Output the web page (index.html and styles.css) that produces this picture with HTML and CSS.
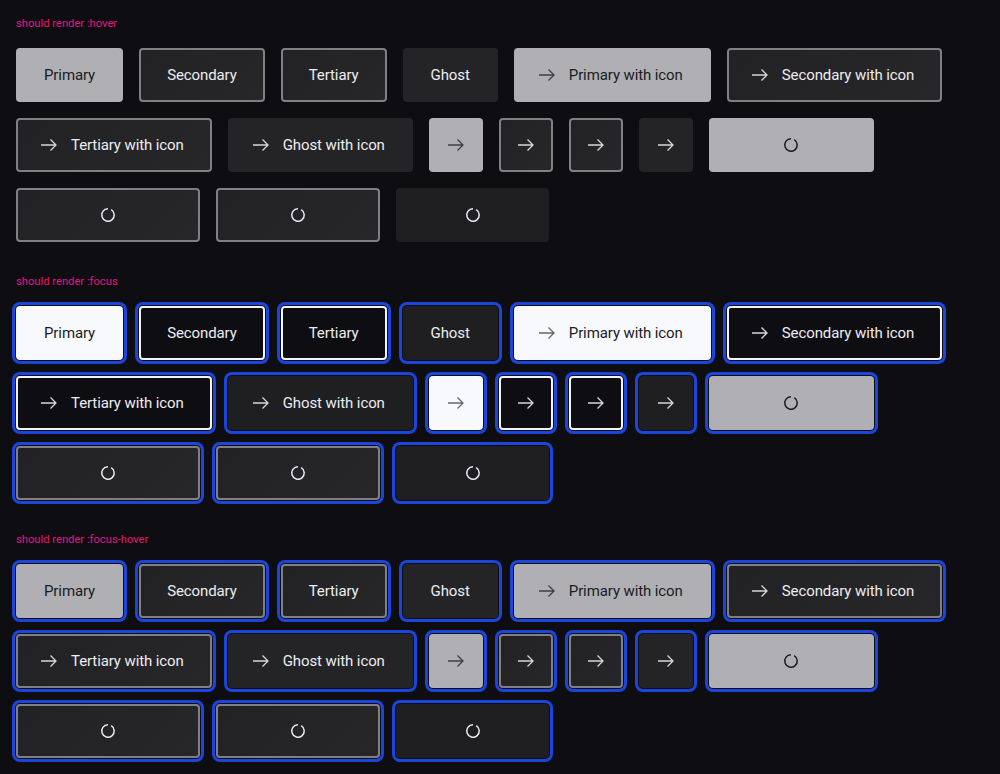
FILE: index.html
```html
<!DOCTYPE html>
<html lang="en">
<head>
<meta charset="utf-8">
<title>Button states</title>
<link rel="stylesheet" href="styles.css">
</head>
<body>
<main class="page">

  <section class="group">
    <p class="label">should render :hover</p>
    <div class="buttons state-hover">
      <button class="btn primary">Primary</button>
      <button class="btn secondary">Secondary</button>
      <button class="btn tertiary">Tertiary</button>
      <button class="btn ghost">Ghost</button>
      <button class="btn primary with-icon"><svg class="ico" viewBox="0 0 24 24"><path d="M4 12h15M13.5 6.5 19 12l-5.5 5.5"/></svg>Primary with icon</button>
      <button class="btn secondary with-icon"><svg class="ico" viewBox="0 0 24 24"><path d="M4 12h15M13.5 6.5 19 12l-5.5 5.5"/></svg>Secondary with icon</button>
      <button class="btn tertiary with-icon"><svg class="ico" viewBox="0 0 24 24"><path d="M4 12h15M13.5 6.5 19 12l-5.5 5.5"/></svg>Tertiary with icon</button>
      <button class="btn ghost with-icon"><svg class="ico" viewBox="0 0 24 24"><path d="M4 12h15M13.5 6.5 19 12l-5.5 5.5"/></svg>Ghost with icon</button>
      <button class="btn primary icon-only"><svg class="ico" viewBox="0 0 24 24"><path d="M4 12h15M13.5 6.5 19 12l-5.5 5.5"/></svg></button>
      <button class="btn secondary icon-only"><svg class="ico" viewBox="0 0 24 24"><path d="M4 12h15M13.5 6.5 19 12l-5.5 5.5"/></svg></button>
      <button class="btn tertiary icon-only"><svg class="ico" viewBox="0 0 24 24"><path d="M4 12h15M13.5 6.5 19 12l-5.5 5.5"/></svg></button>
      <button class="btn ghost icon-only"><svg class="ico" viewBox="0 0 24 24"><path d="M4 12h15M13.5 6.5 19 12l-5.5 5.5"/></svg></button>
      <button class="btn primary loading loading-primary"><svg class="spin" viewBox="0 0 16 16"><path d="M8 1.75A6.25 6.25 0 1 0 11.2 2.65"/></svg></button>
      <button class="btn secondary loading loading-secondary"><svg class="spin" viewBox="0 0 16 16"><path d="M8 1.75A6.25 6.25 0 1 0 11.2 2.65"/></svg></button>
      <button class="btn tertiary loading loading-tertiary"><svg class="spin" viewBox="0 0 16 16"><path d="M8 1.75A6.25 6.25 0 1 0 11.2 2.65"/></svg></button>
      <button class="btn ghost loading loading-ghost"><svg class="spin" viewBox="0 0 16 16"><path d="M8 1.75A6.25 6.25 0 1 0 11.2 2.65"/></svg></button>
    </div>
  </section>

  <section class="group">
    <p class="label">should render :focus</p>
    <div class="buttons state-focus">
      <button class="btn primary">Primary</button>
      <button class="btn secondary">Secondary</button>
      <button class="btn tertiary">Tertiary</button>
      <button class="btn ghost">Ghost</button>
      <button class="btn primary with-icon"><svg class="ico" viewBox="0 0 24 24"><path d="M4 12h15M13.5 6.5 19 12l-5.5 5.5"/></svg>Primary with icon</button>
      <button class="btn secondary with-icon"><svg class="ico" viewBox="0 0 24 24"><path d="M4 12h15M13.5 6.5 19 12l-5.5 5.5"/></svg>Secondary with icon</button>
      <button class="btn tertiary with-icon"><svg class="ico" viewBox="0 0 24 24"><path d="M4 12h15M13.5 6.5 19 12l-5.5 5.5"/></svg>Tertiary with icon</button>
      <button class="btn ghost with-icon"><svg class="ico" viewBox="0 0 24 24"><path d="M4 12h15M13.5 6.5 19 12l-5.5 5.5"/></svg>Ghost with icon</button>
      <button class="btn primary icon-only"><svg class="ico" viewBox="0 0 24 24"><path d="M4 12h15M13.5 6.5 19 12l-5.5 5.5"/></svg></button>
      <button class="btn secondary icon-only"><svg class="ico" viewBox="0 0 24 24"><path d="M4 12h15M13.5 6.5 19 12l-5.5 5.5"/></svg></button>
      <button class="btn tertiary icon-only"><svg class="ico" viewBox="0 0 24 24"><path d="M4 12h15M13.5 6.5 19 12l-5.5 5.5"/></svg></button>
      <button class="btn ghost icon-only"><svg class="ico" viewBox="0 0 24 24"><path d="M4 12h15M13.5 6.5 19 12l-5.5 5.5"/></svg></button>
      <button class="btn primary loading loading-primary"><svg class="spin" viewBox="0 0 16 16"><path d="M8 1.75A6.25 6.25 0 1 0 11.2 2.65"/></svg></button>
      <button class="btn secondary loading loading-secondary"><svg class="spin" viewBox="0 0 16 16"><path d="M8 1.75A6.25 6.25 0 1 0 11.2 2.65"/></svg></button>
      <button class="btn tertiary loading loading-tertiary"><svg class="spin" viewBox="0 0 16 16"><path d="M8 1.75A6.25 6.25 0 1 0 11.2 2.65"/></svg></button>
      <button class="btn ghost loading loading-ghost"><svg class="spin" viewBox="0 0 16 16"><path d="M8 1.75A6.25 6.25 0 1 0 11.2 2.65"/></svg></button>
    </div>
  </section>

  <section class="group">
    <p class="label">should render :focus-hover</p>
    <div class="buttons state-focus-hover">
      <button class="btn primary">Primary</button>
      <button class="btn secondary">Secondary</button>
      <button class="btn tertiary">Tertiary</button>
      <button class="btn ghost">Ghost</button>
      <button class="btn primary with-icon"><svg class="ico" viewBox="0 0 24 24"><path d="M4 12h15M13.5 6.5 19 12l-5.5 5.5"/></svg>Primary with icon</button>
      <button class="btn secondary with-icon"><svg class="ico" viewBox="0 0 24 24"><path d="M4 12h15M13.5 6.5 19 12l-5.5 5.5"/></svg>Secondary with icon</button>
      <button class="btn tertiary with-icon"><svg class="ico" viewBox="0 0 24 24"><path d="M4 12h15M13.5 6.5 19 12l-5.5 5.5"/></svg>Tertiary with icon</button>
      <button class="btn ghost with-icon"><svg class="ico" viewBox="0 0 24 24"><path d="M4 12h15M13.5 6.5 19 12l-5.5 5.5"/></svg>Ghost with icon</button>
      <button class="btn primary icon-only"><svg class="ico" viewBox="0 0 24 24"><path d="M4 12h15M13.5 6.5 19 12l-5.5 5.5"/></svg></button>
      <button class="btn secondary icon-only"><svg class="ico" viewBox="0 0 24 24"><path d="M4 12h15M13.5 6.5 19 12l-5.5 5.5"/></svg></button>
      <button class="btn tertiary icon-only"><svg class="ico" viewBox="0 0 24 24"><path d="M4 12h15M13.5 6.5 19 12l-5.5 5.5"/></svg></button>
      <button class="btn ghost icon-only"><svg class="ico" viewBox="0 0 24 24"><path d="M4 12h15M13.5 6.5 19 12l-5.5 5.5"/></svg></button>
      <button class="btn primary loading loading-primary"><svg class="spin" viewBox="0 0 16 16"><path d="M8 1.75A6.25 6.25 0 1 0 11.2 2.65"/></svg></button>
      <button class="btn secondary loading loading-secondary"><svg class="spin" viewBox="0 0 16 16"><path d="M8 1.75A6.25 6.25 0 1 0 11.2 2.65"/></svg></button>
      <button class="btn tertiary loading loading-tertiary"><svg class="spin" viewBox="0 0 16 16"><path d="M8 1.75A6.25 6.25 0 1 0 11.2 2.65"/></svg></button>
      <button class="btn ghost loading loading-ghost"><svg class="spin" viewBox="0 0 16 16"><path d="M8 1.75A6.25 6.25 0 1 0 11.2 2.65"/></svg></button>
    </div>
  </section>

</main>
</body>
</html>
```

FILE: styles.css
```css
* { box-sizing: border-box; }

html, body {
  margin: 0;
  background: #0e0e12;
}

.page {
  padding: 16px;
  display: flex;
  flex-direction: column;
  gap: 32px;
  font-family: Roboto, "Liberation Sans", sans-serif;
}

.label {
  margin: 0 0 16px;
  height: 16px;
  font-size: 11.2px;
  line-height: 16px;
  color: #e5157d;
}

.buttons {
  display: flex;
  flex-wrap: wrap;
  gap: 16px;
}

.btn {
  display: inline-flex;
  align-items: center;
  justify-content: center;
  gap: 10px;
  height: 54px;
  padding: 0 26px;
  border: 2px solid transparent;
  border-radius: 4px;
  font-family: Roboto, "Liberation Sans", sans-serif;
  font-size: 15px;
  letter-spacing: -0.1px;
  color: #ececf0;
  background: #242427;
  cursor: pointer;
}

.btn.with-icon { padding: 0 26px 0 19px; }
.btn.icon-only { width: 54px; padding: 0; }
.btn.loading { padding: 0; }

.loading-primary { width: 165px; }
.loading-secondary { width: 184px; }
.loading-tertiary { width: 164px; }
.loading-ghost { width: 153px; }

.ico {
  width: 24px;
  height: 24px;
  flex: none;
  fill: none;
  stroke: currentColor;
  stroke-width: 1.3;
  stroke-linecap: butt;
  stroke-linejoin: miter;
}

.spin {
  width: 16px;
  height: 16px;
  fill: none;
  stroke: currentColor;
  stroke-width: 1.5;
}

/* ---------- shared surface looks ---------- */
.state-hover .primary,
.state-focus-hover .primary,
.state-focus .loading.primary {
  background: #b0b0b4;
  color: #1b1b1f;
}

.state-hover .secondary,
.state-hover .tertiary,
.state-focus-hover .secondary,
.state-focus-hover .tertiary,
.state-focus .loading.secondary,
.state-focus .loading.tertiary {
  background: linear-gradient(135deg, #222225 0%, #27272a 100%);
  border-color: #808084;
}

.state-hover .ghost,
.state-focus-hover .ghost {
  background: #242427;
}

.state-hover .loading.ghost,
.state-focus-hover .loading.ghost,
.state-focus .ghost {
  background: #1f1f22;
}

.primary .ico { color: #3e3e44; }
.secondary .ico, .tertiary .ico, .ghost .ico { color: #d6d6da; }
.primary .spin { color: #1b1b1f; }

/* ---------- focus ---------- */
.state-focus .btn,
.state-focus-hover .btn {
  box-shadow: 0 0 0 1px #0e0e12, 0 0 0 4px #1c45dc;
}

.state-focus .primary {
  background: #f8f9fc;
  color: #1b1b1f;
}

.state-focus .secondary,
.state-focus .tertiary {
  background: #0e0e12;
  border-color: #f4f4f6;
}

.state-focus .primary .ico { color: #66666c; }
.state-focus .loading.primary .ico { color: #3e3e44; }
```
